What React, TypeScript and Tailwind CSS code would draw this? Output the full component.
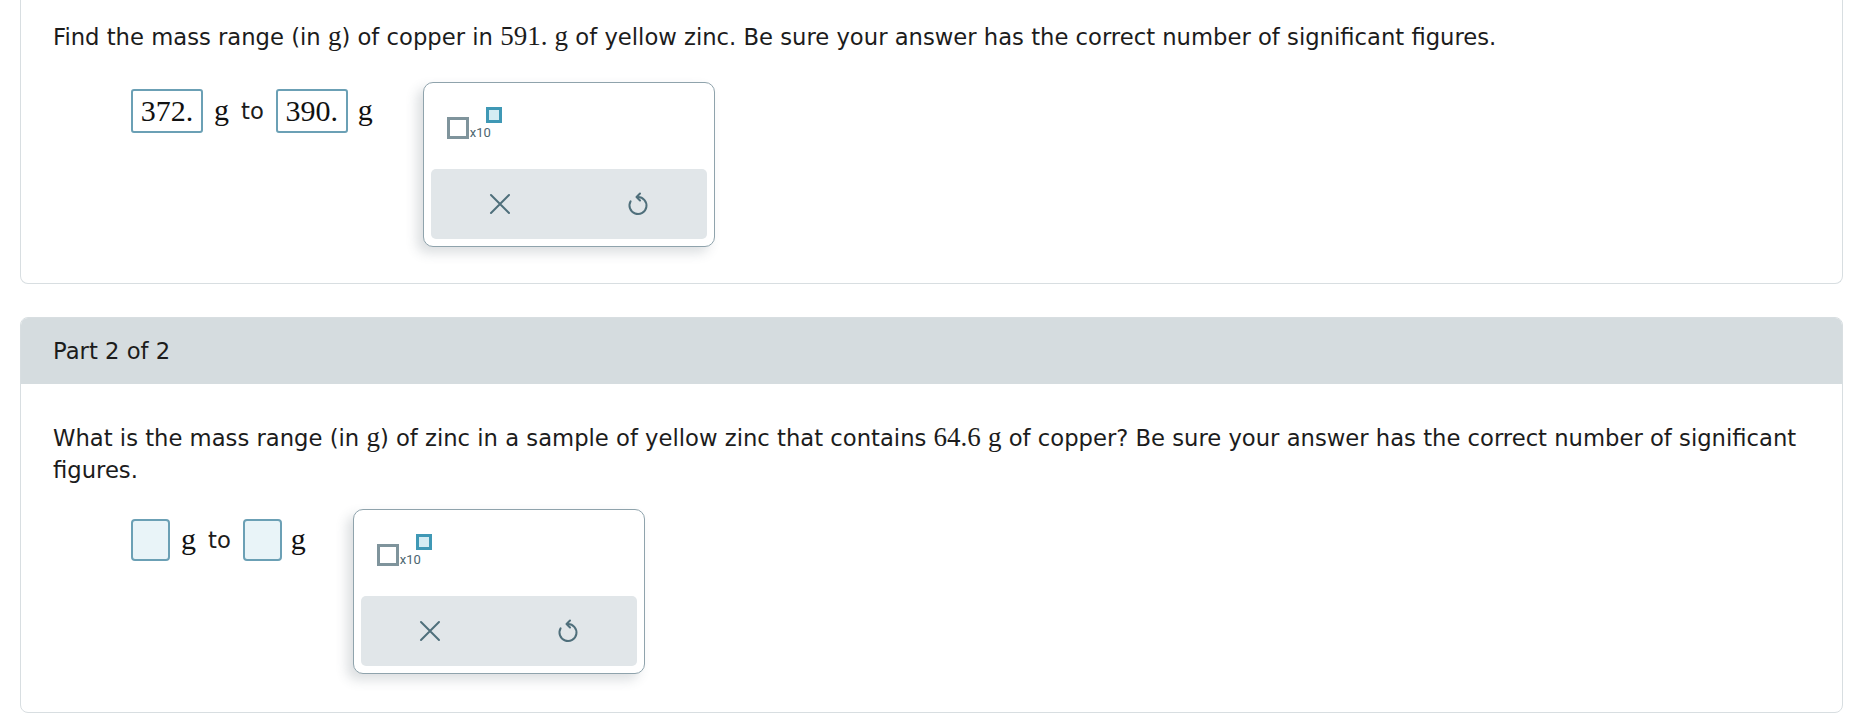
import React from 'react';

const sans = { fontFamily: '"DejaVu Sans", Verdana, sans-serif' };
const serif = { fontFamily: '"Liberation Serif", "Times New Roman", serif' };

const M = ({ children }: { children: React.ReactNode }) => (
  <span className="text-[27px]" style={serif}>
    {children}
  </span>
);

const CloseIcon = () => (
  <svg width="22" height="22" viewBox="0 0 22 22" fill="none">
    <path d="M2 2L20 20M20 2L2 20" stroke="#4f6f7b" strokeWidth="2" strokeLinecap="round" />
  </svg>
);

const UndoIcon = () => (
  <svg width="24" height="26" viewBox="0 0 24 26" fill="none">
    <path
      d="M12 6A8.5 8.5 0 1 1 4.6 10.3"
      stroke="#4f6f7b"
      strokeWidth="2"
      strokeLinecap="round"
    />
    <path
      d="M14 2.5L10.5 6L14 9.5"
      stroke="#4f6f7b"
      strokeWidth="2"
      strokeLinecap="round"
      strokeLinejoin="round"
    />
  </svg>
);

const Palette = () => (
  <div className="w-[292px] h-[165px] shrink-0 rounded-[10px] border border-[#8fa3ac] bg-white shadow-[-6px_6px_12px_rgba(60,80,90,0.18)] flex flex-col">
    <div className="h-[86px] pl-[23px] pt-[24px]">
      <div className="flex items-start">
        <div className="mt-[10px] w-[22px] h-[22px] border-[3px] border-[#7f949c] bg-white" />
        <span
          className="ml-[1px] mt-[19px] text-[13px] leading-none text-[#4b6570]"
          style={{ fontFamily: 'Roboto, Arial, sans-serif' }}
        >
          x10
        </span>
        <div className="-ml-[5px] w-[16px] h-[16px] border-[3px] border-[#3f98b5] bg-[#d4ecf3]" />
      </div>
    </div>
    <div className="mx-[7px] h-[70px] rounded-[5px] bg-[#e1e6e9] grid grid-cols-2">
      <div className="flex items-center justify-center">
        <CloseIcon />
      </div>
      <div className="flex items-center justify-center">
        <UndoIcon />
      </div>
    </div>
  </div>
);

const FilledBox = ({ value }: { value: string }) => (
  <div
    className="w-[72px] h-[44px] rounded-[3px] border-2 border-[#6ba0b5] bg-white flex items-center justify-center text-[30px] text-[#111]"
    style={serif}
  >
    {value}
  </div>
);

const EmptyBox = () => (
  <div className="w-[39px] h-[42px] rounded-[4px] border-2 border-[#6ba0b5] bg-[#e9f4f8]" />
);

const Unit = () => (
  <span className="text-[30px] text-[#111]" style={serif}>
    g
  </span>
);

export default function App() {
  return (
    <div
      className="min-h-[728px] bg-white pl-[20px] pr-[6px] text-[22.7px] leading-[32px] text-[#1c1c1c]"
      style={sans}
    >
      <div className="border-x border-b border-[#d8dee1] rounded-b-[8px] pt-[20px] pl-[32px] pr-[32px] pb-[36px]">
        <p>
          Find the mass range (in <M>g</M>) of copper in <M>591.</M> <M>g</M> of yellow zinc. Be sure your answer
          has the correct number of significant figures.
        </p>
        <div className="mt-[29px] pl-[78px] flex items-start">
          <div className="mt-[7px] flex items-center">
            <FilledBox value="372." />
            <span className="ml-[11px]">
              <Unit />
            </span>
            <span className="ml-[12px]">to</span>
            <span className="ml-[12px]">
              <FilledBox value="390." />
            </span>
            <span className="ml-[10px]">
              <Unit />
            </span>
          </div>
          <div className="ml-[50px]">
            <Palette />
          </div>
        </div>
      </div>

      <div className="mt-[33px] border border-[#d8dee1] rounded-[8px] overflow-hidden">
        <div className="h-[66px] bg-[#d5dcdf] flex items-center pl-[32px]">Part 2 of 2</div>
        <div className="pt-[37px] pl-[32px] pr-[32px] pb-[38px]">
          <p>
            What is the mass range (in <M>g</M>) of zinc in a sample of yellow zinc that contains <M>64.6</M>{' '}
            <M>g</M> of copper? Be sure your answer has the correct number of significant figures.
          </p>
          <div className="mt-[23px] pl-[78px] flex items-start">
            <div className="mt-[10px] flex items-center">
              <EmptyBox />
              <span className="ml-[11px]">
                <Unit />
              </span>
              <span className="ml-[12px]">to</span>
              <span className="ml-[12px]">
                <EmptyBox />
              </span>
              <span className="ml-[9px]">
                <Unit />
              </span>
            </div>
            <div className="ml-[47px]">
              <Palette />
            </div>
          </div>
        </div>
      </div>
    </div>
  );
}
